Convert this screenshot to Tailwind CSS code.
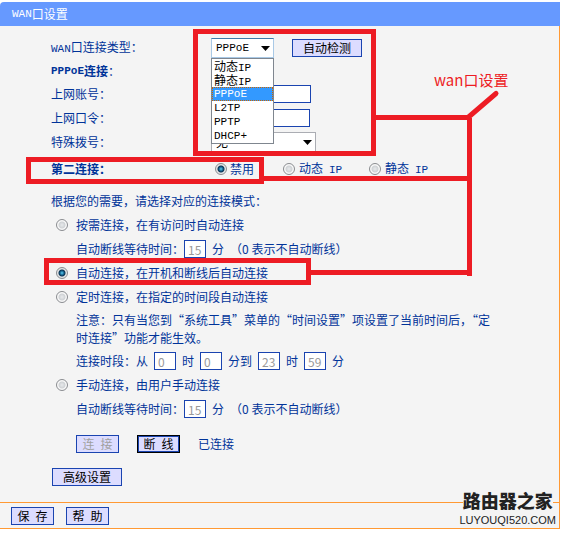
<!DOCTYPE html>
<html lang="zh-CN">
<head>
  <meta charset="UTF-8" />
  <meta name="viewport" content="width=device-width, initial-scale=1.0"/>
  <title>WAN口设置</title>
  <script src="https://cdn.jsdelivr.net/npm/@tailwindcss/browser@4"></script>
</head>
<body class="bg-white pt-0.5 pr-0.5 font-['Noto_Sans_CJK_SC',sans-serif] text-xs text-[#003399]">
  <main class="relative bg-[#f4f4f4] rounded-tl">
    <!-- Title -->
    <h1 class="flex h-6 items-center rounded-tl bg-[#6699ff] pl-3 text-white"><span class="font-['Liberation_Mono',monospace] text-[11px]">WAN</span>口设置</h1>

    <form class="border-r border-b border-[#ff9933]">
      <div class="pt-2.5 pl-[51px]">
        <!-- Connection type -->
        <div class="flex h-6 items-center">
          <label for="wanType" class="w-40"><span class="font-['Liberation_Mono',monospace] text-[11px]">WAN</span>口连接类型：</label>
          <div class="relative w-[63px]">
            <select id="wanType" class="block h-5 w-full appearance-none border border-[#a9c9e6] border-t-[#3d7bad] bg-white pl-1 font-['Liberation_Mono',monospace] text-[11px] text-black">
              <option>动态IP</option>
              <option>静态IP</option>
              <option selected>PPPoE</option>
              <option>L2TP</option>
              <option>PPTP</option>
              <option>DHCP+</option>
            </select>
            <svg class="pointer-events-none absolute top-2 right-1 h-[5px] w-[9px]" viewBox="0 0 9 5"><path d="M0 0h9L4.500 5z" fill="#000"/></svg>
            <!-- Open list -->
            <ul class="absolute top-full left-0 z-10 w-full border border-[#7f868f] bg-white text-xs leading-[14px] text-black">
              <li class="h-[14px] pl-0.5">动态<span class="font-['Liberation_Mono',monospace] text-[11px]">IP</span></li>
              <li class="h-[14px] pl-0.5">静态<span class="font-['Liberation_Mono',monospace] text-[11px]">IP</span></li>
              <li class="h-[14px] bg-[#3399ff] pl-0.5 font-['Liberation_Mono',monospace] text-[11px] text-white outline-1 -outline-offset-1 outline-dotted outline-[#cc6600]">PPPoE</li>
              <li class="h-[14px] pl-0.5 font-['Liberation_Mono',monospace] text-[11px]">L2TP</li>
              <li class="h-[14px] pl-0.5 font-['Liberation_Mono',monospace] text-[11px]">PPTP</li>
              <li class="h-[14px] pl-0.5 font-['Liberation_Mono',monospace] text-[11px]">DHCP+</li>
            </ul>
          </div>
          <button type="button" class="ml-[18px] flex h-[18px] w-[70px] items-center justify-center border border-[#1a44b0] bg-[#dcdcff] text-black">自动检测</button>
        </div>

        <!-- PPPoE -->
        <h2 class="flex h-[22px] w-fit items-center font-bold"><span class="font-['Liberation_Mono',monospace] text-[11px]">PPPoE</span>连接<span class="font-normal">：</span></h2>
        <div class="flex h-6 items-center">
          <label for="account" class="w-40">上网账号：</label>
          <input type="text" id="account" class="h-[18px] w-[100px] border border-[#1a44b0] bg-white px-1" />
        </div>
        <div class="flex h-6 items-center">
          <label for="password" class="w-40">上网口令：</label>
          <input type="password" id="password" class="h-[18px] w-[99px] border border-[#1a44b0] bg-white px-1" />
        </div>
        <div class="flex h-6 items-center">
          <label for="dial" class="w-40">特殊拨号：</label>
          <div class="relative w-[105px]">
            <select id="dial" class="block h-5 w-full appearance-none border border-[#abadb3] bg-white pl-1 text-black">
              <option>无</option>
            </select>
            <svg class="pointer-events-none absolute top-2 right-1 h-[5px] w-[9px]" viewBox="0 0 9 5"><path d="M0 0h9L4.500 5z" fill="#000"/></svg>
          </div>
        </div>

        <!-- Second connection -->
        <div class="flex h-[30px] items-center">
          <b class="w-[164px]">第二连接：</b>
          <label class="flex w-[68px] items-center gap-[3px]"><input type="radio" name="second" checked class="size-3 appearance-none rounded-full border border-[#8a8c90] bg-[radial-gradient(circle,#5fd0f5_0px,#12608c_2px,#0c3352_3px,#e4e6e8_4px)]" />禁用</label>
          <label class="flex w-[86px] items-center gap-1"><input type="radio" name="second" class="size-3 appearance-none rounded-full border border-[#8a8c90] bg-[radial-gradient(circle,#e8eaec_0px,#cfd2d5_3px,#f8f8f8_4px)]" /><span>动态&ensp;<span class="font-['Liberation_Mono',monospace] text-[11px]">IP</span></span></label>
          <label class="flex items-center gap-1"><input type="radio" name="second" class="size-3 appearance-none rounded-full border border-[#8a8c90] bg-[radial-gradient(circle,#e8eaec_0px,#cfd2d5_3px,#f8f8f8_4px)]" /><span>静态&ensp;<span class="font-['Liberation_Mono',monospace] text-[11px]">IP</span></span></label>
        </div>

        <!-- Connection mode -->
        <p class="mt-[5px] flex h-6 items-center">根据您的需要，请选择对应的连接模式：</p>
        <div class="pl-[5px]">
          <label class="flex h-6 items-center gap-2"><input type="radio" name="mode" class="size-3 appearance-none rounded-full border border-[#8a8c90] bg-[radial-gradient(circle,#e8eaec_0px,#cfd2d5_3px,#f8f8f8_4px)]" />按需连接，在有访问时自动连接</label>
          <div class="flex h-6 items-center gap-1.5 pl-5">
            <label for="idle1" class="-mr-1.5">自动断线等待时间：</label>
            <input type="text" id="idle1" value="15" disabled class="h-[18px] w-[22px] border border-[#1a44b0] bg-white pl-[3px] text-[#999999]" />
            <span>分</span><span>（0 表示不自动断线）</span>
          </div>
          <label class="flex h-6 items-center gap-2"><input type="radio" name="mode" checked class="size-3 appearance-none rounded-full border border-[#8a8c90] bg-[radial-gradient(circle,#5fd0f5_0px,#12608c_2px,#0c3352_3px,#e4e6e8_4px)]" />自动连接，在开机和断线后自动连接</label>
          <label class="flex h-6 items-center gap-2"><input type="radio" name="mode" class="size-3 appearance-none rounded-full border border-[#8a8c90] bg-[radial-gradient(circle,#e8eaec_0px,#cfd2d5_3px,#f8f8f8_4px)]" />定时连接，在指定的时间段自动连接</label>
          <p class="max-w-[440px] py-0.5 pl-5 leading-[18px]">注意：只有当您到“系统工具”菜单的“时间设置”项设置了当前时间后，“定时连接”功能才能生效。</p>
          <div class="flex h-6 items-center gap-1.5 pl-5">
            <label for="fromHour">连接时段：从</label>
            <input type="text" id="fromHour" value="0" disabled class="h-[18px] w-[22px] border border-[#1a44b0] bg-white pl-[3px] text-[#999999]" />
            <label for="fromMin">时</label>
            <input type="text" id="fromMin" value="0" disabled class="h-[18px] w-[22px] border border-[#1a44b0] bg-white pl-[3px] text-[#999999]" />
            <label for="toHour">分到</label>
            <input type="text" id="toHour" value="23" disabled class="h-[18px] w-[22px] border border-[#1a44b0] bg-white pl-[3px] text-[#999999]" />
            <label for="toMin">时</label>
            <input type="text" id="toMin" value="59" disabled class="h-[18px] w-[22px] border border-[#1a44b0] bg-white pl-[3px] text-[#999999]" />
            <span>分</span>
          </div>
          <label class="flex h-6 items-center gap-2"><input type="radio" name="mode" class="size-3 appearance-none rounded-full border border-[#8a8c90] bg-[radial-gradient(circle,#e8eaec_0px,#cfd2d5_3px,#f8f8f8_4px)]" />手动连接，由用户手动连接</label>
          <div class="flex h-6 items-center gap-1.5 pl-5">
            <label for="idle2" class="-mr-1.5">自动断线等待时间：</label>
            <input type="text" id="idle2" value="15" disabled class="h-[18px] w-[22px] border border-[#1a44b0] bg-white pl-[3px] text-[#999999]" />
            <span>分</span><span>（0 表示不自动断线）</span>
          </div>
          <div class="mt-[11px] flex h-6 items-center gap-[18px] pl-5">
            <button type="button" disabled class="flex h-[18px] w-[43px] items-center justify-center border border-[#1a44b0] bg-[#dcdcff] text-[#a0a0a0]">连&ensp;接</button>
            <button type="button" class="flex h-[18px] w-[43px] items-center justify-center border border-black bg-[#dcdcff] text-black inset-ring inset-ring-[#1a44b0]">断&ensp;线</button>
            <span>已连接</span>
          </div>
        </div>
        <button type="button" class="mt-3 mb-4 ml-px flex h-[18px] w-[70px] items-center justify-center border border-[#1a44b0] bg-[#dcdcff] text-black">高级设置</button>
      </div>

      <!-- Bottom bar -->
      <div class="flex gap-3 border-t border-[#ff9933] pt-1 pb-[3px] pl-[11px]">
        <button type="submit" class="flex h-[18px] w-[43px] items-center justify-center border border-[#1a44b0] bg-[#dcdcff] text-black">保&ensp;存</button>
        <button type="button" class="flex h-[18px] w-[43px] items-center justify-center border border-[#1a44b0] bg-[#dcdcff] text-black">帮&ensp;助</button>
      </div>
    </form>

    <!-- Watermark -->
    <div class="absolute right-1 bottom-px text-center text-[#222222]">
      <div class="mx-auto mb-0.5 w-fit bg-[#f4f4f4] text-lg leading-5 font-black">路由器之家</div>
      <div class="font-['Liberation_Sans',sans-serif] text-[11px] leading-4">LUYOUQI520.COM</div>
    </div>

    <!-- Red marks -->
    <svg class="pointer-events-none absolute top-0 left-0 z-20" width="510" height="290" viewBox="0 2 510 290" fill="none" stroke="#ed1c24" stroke-width="5">
      <rect x="195.500" y="31.500" width="178" height="122"/>
      <rect x="28.500" y="159.500" width="233" height="22"/>
      <rect x="46.500" y="260.500" width="262" height="22"/>
      <path d="M376 117.500H469M264 178.500H469M311 272.500H472M469.500 118V276"/>
      <path d="M468 117.500L496 93.500" stroke-linecap="round"/>
      <text x="434" y="86" fill="#ed1c24" stroke="none" font-size="15">wan口设置</text>
    </svg>
  </main>
</body>
</html>
